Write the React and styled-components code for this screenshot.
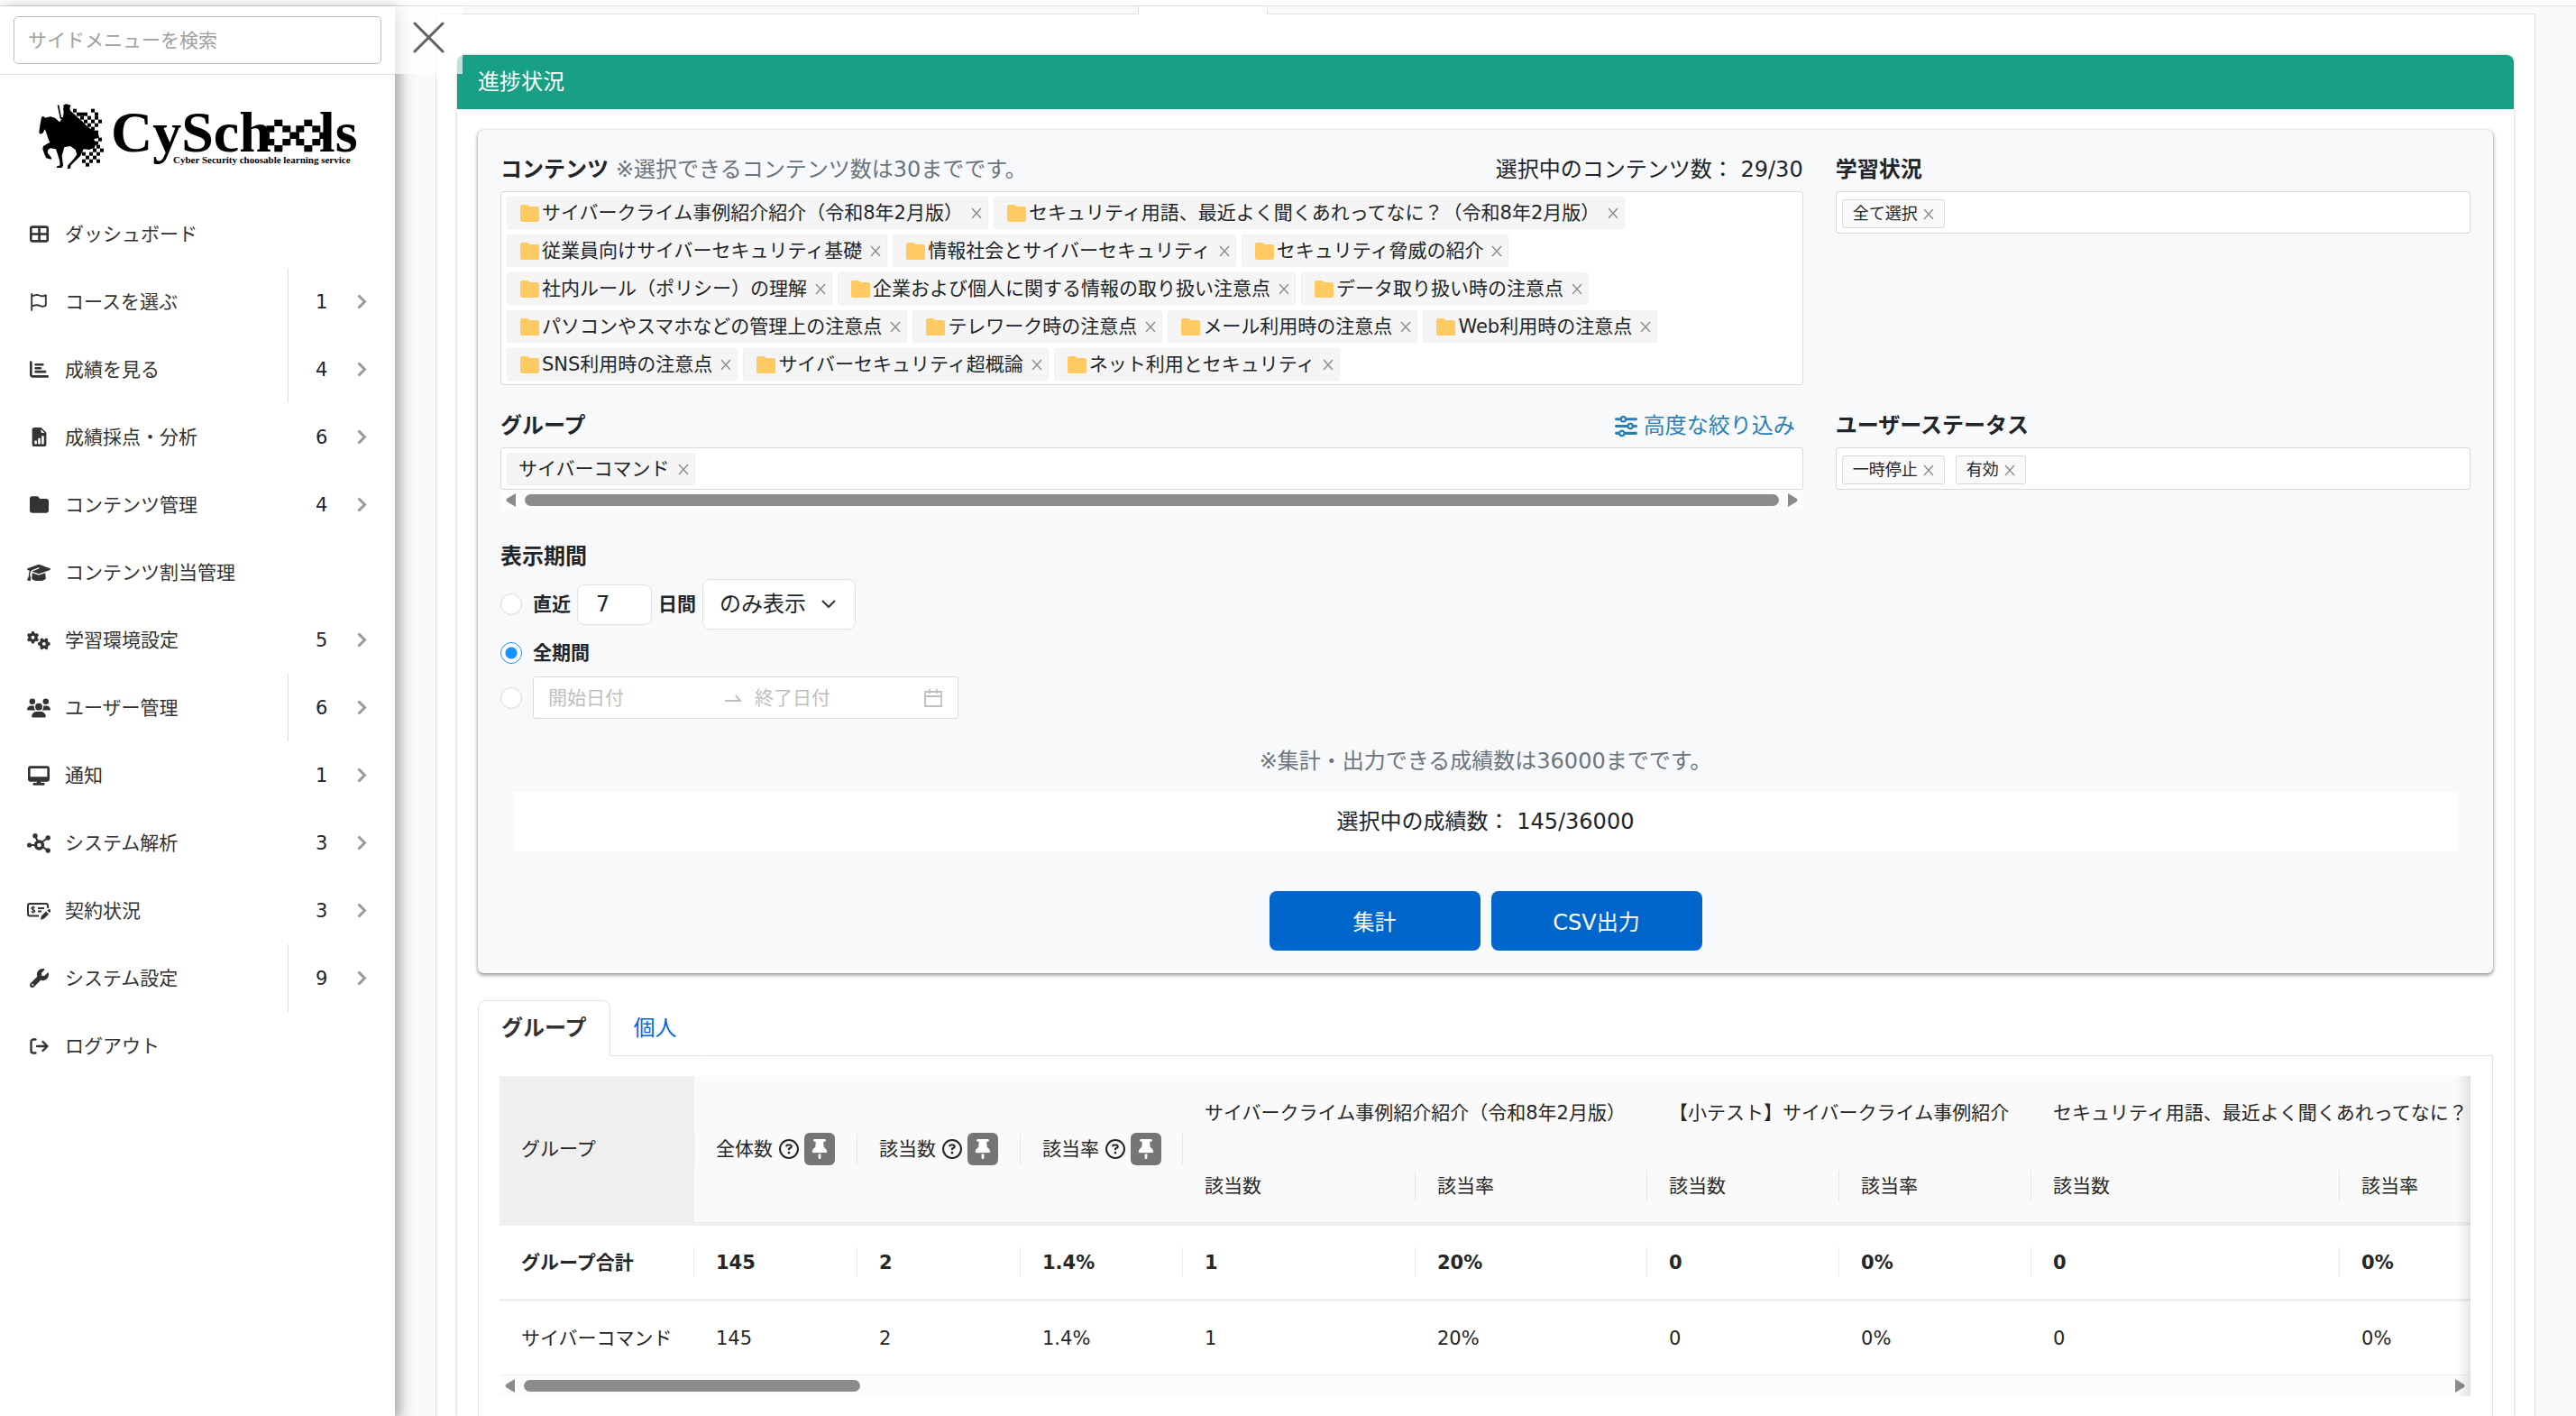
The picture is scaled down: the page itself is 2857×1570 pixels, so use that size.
import React, { useState } from 'react';
import styled, { createGlobalStyle } from 'styled-components';
import {
  FaTableCellsLarge,
  FaRegFlag,
  FaChartBar,
  FaFolder,
  FaGraduationCap,
  FaGears,
  FaUsers,
  FaDesktop,
  FaWrench,
  FaSliders,
  FaThumbtack,
  FaRegCircleQuestion
} from 'react-icons/fa6';
import { BsFileEarmarkBarGraphFill } from 'react-icons/bs';

const GlobalStyle = createGlobalStyle`
  * {
    box-sizing: border-box;
  }

  body {
    margin: 0;
    background: #fafafa;
    color: #212529;
    font-family: 'DejaVu Sans', 'Noto Sans CJK JP', sans-serif;
    font-size: 24px;
    line-height: 36px;
  }

  button,
  input,
  select {
    font-family: inherit;
    color: inherit;
  }

  button {
    border: none;
    padding: 0;
    background: none;
    cursor: pointer;
  }
`;

// Page frame
const Page = styled.div`
  display: flex;
  flex-direction: column;
  min-height: 100vh;
  overflow: hidden;
`;

const TopBar = styled.header`
  height: 7px;
  flex: none;
  background: #fff;
  border-bottom: 1px solid #ddd;
`;

const Columns = styled.div`
  display: flex;
  flex: 1;
`;

// Sidebar
const Sidebar = styled.aside`
  position: relative;
  z-index: 1;
  flex: none;
  width: 438px;
  background: #fff;
  box-shadow: 4px 4px 16px rgba(0, 0, 0, 0.4);
`;

const SearchArea = styled.div`
  padding: 11px 15px;
  border-bottom: 1px solid #ddd;
`;

const SearchInput = styled.input`
  display: block;
  width: 100%;
  height: 53px;
  padding: 0 15px;
  border: 1px solid #bbb;
  border-radius: 5px;
  font-size: 21px;
  outline: none;

  &::placeholder {
    color: #a0a0a0;
  }
`;

const CloseButton = styled.button`
  position: absolute;
  top: 0;
  left: 100%;
  display: flex;
  align-items: center;
  justify-content: center;
  width: 75px;
  height: 75px;
  padding-bottom: 7px;
  background: rgba(255, 255, 255, 0.7);
`;

const LogoLink = styled.a`
  display: block;
  padding: 23px 36px 26px;
  color: #000;

  svg {
    display: block;
  }
`;

const MenuItem = styled.li`
  display: flex;
  height: 75px;
`;

const MenuList = styled.ul`
  margin: 0;
  padding: 0;
  list-style: none;
`;

const MenuLink = styled.a`
  display: flex;
  align-items: center;
  flex: 1;
  gap: 16px;
  padding-left: 30px;
  color: #333;
  font-size: 21px;
  text-decoration: none;
`;

const MenuIcon = styled.span`
  display: flex;
  justify-content: center;
  width: 26px;
`;

const MenuToggle = styled.button`
  display: flex;
  align-items: center;
  justify-content: space-between;
  width: 119px;
  padding: 0 31px 0 30px;
  border-left: 1px solid ${props => (props.$divided ? '#ddd' : 'transparent')};
  font-size: 21px;
`;

// Main column
const Main = styled.main`
  display: flex;
  flex-direction: column;
  flex: 1;
  min-width: 0;
  padding: 0 45px;
`;

const PageTabs = styled.div`
  display: flex;
  height: 9px;
`;

const TabStrip = styled.div`
  flex: ${props => props.$grow};
  border-bottom: 1px solid #dee2e6;
`;

const CurrentTab = styled.div`
  width: 144px;
  background: #fff;
  border: solid #dee2e6;
  border-width: 0 1px;
`;

const PageBody = styled.div`
  display: flex;
  flex-direction: column;
  flex: 1;
  padding: 45px 23px 0;
  background: #fff;
  border: solid #dee2e6;
  border-width: 0 1px;
`;

const Card = styled.section`
  display: flex;
  flex-direction: column;
  flex: 1;
  border-radius: 8px 8px 0 0;
  box-shadow: 0 0 3px rgba(0, 0, 0, 0.3);
`;

const CardHeader = styled.h1`
  margin: 0;
  padding: 12px 23px;
  border-radius: 8px 8px 0 0;
  background: #17a085;
  color: #fff;
  font-size: 24px;
  font-weight: 400;
`;

const CardBody = styled.div`
  display: flex;
  flex-direction: column;
  flex: 1;
  padding: 23px 23px 0;
`;

// Filter form
const FilterPanel = styled.form`
  padding: 26px 25px 25px;
  border-radius: 6px;
  background: #f8f9fb;
  box-shadow: 0 2px 4px rgba(0, 0, 0, 0.45), 0 0 1px rgba(0, 0, 0, 0.3);
`;

const FilterRow = styled.div`
  display: flex;
  margin: 0 -18px 27px;
`;

const FilterCol = styled.div`
  width: ${props => (props.$wide ? '66.6667%' : '33.3333%')};
  padding: 0 18px;
`;

const FieldHead = styled.div`
  display: flex;
  align-items: center;
  gap: 8px;
  margin-bottom: 6px;
`;

const FieldTitle = styled.span`
  font-weight: 700;
`;

const Note = styled.span`
  color: #6c757d;
`;

const Counter = styled.span`
  margin-left: auto;
`;

const AdvancedLink = styled.a`
  display: flex;
  align-items: center;
  gap: 7px;
  margin-left: auto;
  padding-right: 9px;
  color: #2980b9;
  text-decoration: none;
`;

const TagBox = styled.div`
  display: flex;
  flex-wrap: wrap;
  align-items: center;
  gap: 6px;
  min-height: 47px;
  padding: 5px 6px 4px;
  border: 1px solid #d9d9d9;
  border-radius: 3px;
  background: #fff;
`;

const Tag = styled.span`
  display: flex;
  align-items: center;
  height: 36px;
  padding: 0 6px 0 12px;
  border: 1px solid #f0f0f0;
  border-radius: 3px;
  background: #f5f5f5;
  font-size: 21px;
  white-space: nowrap;

  button {
    display: flex;
    margin-left: 9px;
  }
`;

const SmallTag = styled(Tag)`
  height: 32px;
  margin: 2px 6px 0 0;
  padding: 0 11px;
  border-color: #d9d9d9;
  background: #fafafa;
  font-size: 18px;

  button {
    margin-left: 6px;
  }
`;

const FolderIcon = styled.svg`
  margin: 0 3px 0 2px;
`;

const ScrollBar = styled.div`
  display: flex;
  align-items: center;
  gap: 10px;
  height: 23px;
  padding: 0 6px;
  background: #fcfcfc;
`;

const ScrollTrack = styled.div`
  flex: 1;
`;

const ScrollThumb = styled.div`
  height: 13px;
  border-radius: 7px;
  background: #8b8b8b;
`;

const PeriodGroup = styled.fieldset`
  margin: 0;
  padding: 0;
  border: none;

  legend {
    margin-bottom: 7px;
    padding: 6px 0 0;
    font-weight: 700;
  }
`;

const PeriodRow = styled.div`
  display: flex;
  align-items: center;
  gap: 7px;
  margin-bottom: 8px;
  font-size: 21px;

  label {
    display: flex;
    align-items: center;
    gap: 12px;
    font-weight: 700;
  }
`;

const Radio = styled.input`
  appearance: none;
  width: 24px;
  height: 24px;
  margin: 0;
  border: 1px solid #d9d9d9;
  border-radius: 50%;
  background: #fff;

  &:checked {
    border-color: #1890ff;
    background: radial-gradient(circle, #1890ff 6px, #fff 7px);
  }
`;

const DaysInput = styled.input`
  width: 83px;
  height: 45px;
  padding: 0 20px;
  border: 1px solid #dee2e6;
  border-radius: 8px;
  background: #fff;
  font-size: 24px;
`;

const SelectWrap = styled.div`
  display: grid;
  align-items: center;
  width: 170px;

  select,
  svg {
    grid-area: 1 / 1;
  }

  svg {
    justify-self: end;
    margin-right: 22px;
    pointer-events: none;
  }
`;

const Select = styled.select`
  appearance: none;
  width: 100%;
  height: 56px;
  padding: 0 18px;
  border: 1px solid #dee2e6;
  border-radius: 8px;
  background: #fff;
  font-size: 24px;
`;

const DateRange = styled.div`
  display: flex;
  align-items: center;
  gap: 15px;
  width: 472px;
  height: 47px;
  margin-left: 5px;
  padding: 0 17px 0 16px;
  border: 1px solid #d9d9d9;
  border-radius: 3px;
  background: #fff;

  svg {
    flex: none;
  }
`;

const DateInput = styled.input`
  flex: 1;
  min-width: 0;
  padding: 0;
  border: none;
  background: none;
  font-size: 21px;
  outline: none;

  &:first-child {
    flex: none;
    width: 181px;
  }

  &::placeholder {
    color: #bfbfbf;
  }
`;

const LimitNote = styled.p`
  margin: 21px 0 16px;
  color: #6c757d;
  text-align: center;
`;

const ResultCount = styled.div`
  margin: 0 14px 44px;
  padding: 15px;
  background: #fff;
  text-align: center;
`;

const Actions = styled.div`
  display: flex;
  justify-content: center;
  gap: 12px;
`;

const PrimaryButton = styled.button`
  width: 234px;
  height: 66px;
  padding-bottom: 2px;
  border-radius: 8px;
  background: #0066cc;
  color: #fff;
  font-size: 24px;
`;

// Result tabs and table
const ResultTabs = styled.div`
  display: flex;
  margin-top: 30px;
`;

const ResultTab = styled.button`
  height: 62px;
  padding: 0 25px 5px;
  border: 1px solid;
  border-color: ${props => (props.$active ? '#dee2e6 #dee2e6 #fff' : 'transparent transparent #dee2e6')};
  border-radius: ${props => (props.$active ? '9px 9px 0 0' : '0')};
  color: ${props => (props.$active ? '#333' : '#0066ee')};
  font-size: 24px;
  font-weight: ${props => (props.$active ? 700 : 400)};
`;

const TabRest = styled.div`
  flex: 1;
  border-bottom: 1px solid #dee2e6;
`;

const ResultBody = styled.div`
  flex: 1;
  padding: 22px 24px 24px 23px;
  border: solid #dee2e6;
  border-width: 0 1px;
`;

const TableArea = styled.div`
  position: relative;

  &::after {
    content: '';
    position: absolute;
    top: 0;
    right: 0;
    bottom: 0;
    width: 15px;
    background: linear-gradient(to right, rgba(0, 0, 0, 0), rgba(0, 0, 0, 0.1));
  }
`;

const TableScroll = styled.div`
  overflow: hidden;
`;

const Table = styled.table`
  width: 2383px;
  table-layout: fixed;
  border-collapse: separate;
  border-spacing: 0;
  color: #262626;
  font-size: 21px;
  text-align: left;
`;

const HeadCell = styled.th`
  height: ${props => (props.$last ? 84 : 82)}px;
  padding: 0 0 0 24px;
  border-bottom: ${props => (props.$last ? 4 : 0)}px solid #efefef;
  background-color: ${props => (props.$fixed ? '#efefef' : '#fafafa')};
  background-image: linear-gradient(#e6e6e6, #e6e6e6);
  background-repeat: no-repeat;
  background-position: right center;
  background-size: ${props => (props.$plain ? 0 : 1)}px 34px;
  font-weight: 400;
  white-space: nowrap;
`;

const TotalCell = styled.td`
  height: 84px;
  padding: 0 0 0 24px;
  border-bottom: 3px solid #efefef;
  background: linear-gradient(#ebebeb, #ebebeb) right center / 1px 33px no-repeat;
  font-weight: 700;
`;

const Cell = styled.td`
  height: 82px;
  padding: 0 0 0 24px;
  border-bottom: 1px solid #f0f0f0;
`;

const CellLink = styled.a`
  color: #262626;
  text-decoration: none;
`;

const PinnedHead = styled.div`
  display: flex;
  align-items: center;

  svg {
    flex: none;
  }
`;

const HelpIcon = styled(FaRegCircleQuestion)`
  margin: 0 6px 0 7px;
`;

const PinButton = styled.button`
  display: flex;
  align-items: center;
  justify-content: center;
  width: 34px;
  height: 36px;
  border-radius: 6px;
  background: #757575;
  color: #fff;
`;

const NodesIcon = () => (
  <svg width="26" height="22" viewBox="0 0 26 22" fill="#333" stroke="#333" strokeWidth="2">
    <path d="M3 13h7M9 3l3 6M23 5l-7 5M23 19l-7-5" />
    <circle cx="13.5" cy="13" r="4" fill="#fff" strokeWidth="3.400" />
    <g stroke="none">
      <circle cx="2.6" cy="13" r="2.6" />
      <circle cx="9" cy="2.8" r="2.7" />
      <circle cx="23.2" cy="5" r="2.7" />
      <circle cx="23.2" cy="19" r="2.7" />
    </g>
  </svg>
);

const ContractIcon = () => (
  <svg width="26" height="20" viewBox="0 0 26 20" fill="none" stroke="#333" strokeWidth="2">
    <path d="M13 15.5H3a2 2 0 0 1-2-2V4a2 2 0 0 1 2-2h18a2 2 0 0 1 2 2v3" />
    <path d="M12 7h7M12 10.5h4" />
    <path d="M8.8 6.5C7 5.4 4.8 5.8 4.9 7.2c.1 1.6 4 1.1 3.9 3-.1 1.5-2.8 1.5-4.2.4M6.8 4.5v8" strokeWidth="1.3" />
    <path d="M15 20l1-4.5 5-5 3 3-5 5zM22.5 9.5l1-1a1.600 1.600 0 0 1 2.400 2.400l-1 1z" fill="#333" stroke="none" />
  </svg>
);

const LogoutIcon = () => (
  <svg width="21" height="18" viewBox="0 0 21 18" fill="none" stroke="#333" strokeWidth="2.4" strokeLinecap="round" strokeLinejoin="round">
    <path d="M6.5 1.5H4A2.5 2.5 0 0 0 1.5 4v10A2.5 2.5 0 0 0 4 16.5h2.5M8 9h11.5M14.5 4l5 5-5 5" />
  </svg>
);

const menu = [
  { label: 'ダッシュボード', icon: <FaTableCellsLarge size={21} /> },
  { label: 'コースを選ぶ', icon: <FaRegFlag size={20} />, count: 1, divided: true },
  { label: '成績を見る', icon: <FaChartBar size={21} />, count: 4, divided: true },
  { label: '成績採点・分析', icon: <BsFileEarmarkBarGraphFill size={21} />, count: 6 },
  { label: 'コンテンツ管理', icon: <FaFolder size={21} />, count: 4 },
  { label: 'コンテンツ割当管理', icon: <FaGraduationCap size={26} /> },
  { label: '学習環境設定', icon: <FaGears size={26} />, count: 5 },
  { label: 'ユーザー管理', icon: <FaUsers size={26} />, count: 6, divided: true },
  { label: '通知', icon: <FaDesktop size={24} />, count: 1 },
  { label: 'システム解析', icon: <NodesIcon />, count: 3 },
  { label: '契約状況', icon: <ContractIcon />, count: 3 },
  { label: 'システム設定', icon: <FaWrench size={21} />, count: 9, divided: true },
  { label: 'ログアウト', icon: <LogoutIcon /> }
];

const contents = [
  'サイバークライム事例紹介紹介（令和8年2月版）',
  'セキュリティ用語、最近よく聞くあれってなに？（令和8年2月版）',
  '従業員向けサイバーセキュリティ基礎',
  '情報社会とサイバーセキュリティ',
  'セキュリティ脅威の紹介',
  '社内ルール（ポリシー）の理解',
  '企業および個人に関する情報の取り扱い注意点',
  'データ取り扱い時の注意点',
  'パソコンやスマホなどの管理上の注意点',
  'テレワーク時の注意点',
  'メール利用時の注意点',
  'Web利用時の注意点',
  'SNS利用時の注意点',
  'サイバーセキュリティ超概論',
  'ネット利用とセキュリティ'
];

const columnWidths = [216, 181, 181, 180, 258, 257, 213, 213, 342, 342];
const pinnedColumns = ['全体数', '該当数', '該当率'];
const courseColumns = [
  'サイバークライム事例紹介紹介（令和8年2月版）',
  '【小テスト】サイバークライム事例紹介',
  'セキュリティ用語、最近よく聞くあれってなに？（令和8年2月版）'
];
const values = ['145', '2', '1.4%', '1', '20%', '0', '0%', '0', '0%'];

// Squares that scatter off the rider's cape, [x, y]
const capePixels = [
  [135, 44], [147, 56], [159, 68], [171, 56], [195, 44], [207, 56], [171, 80], [183, 68],
  [195, 80], [207, 68], [183, 92], [207, 92], [219, 80], [195, 104], [207, 116], [159, 56],
  [219, 140], [207, 152], [195, 164], [213, 164], [225, 176], [213, 188], [201, 176], [189, 188],
  [177, 200], [165, 188], [201, 200], [213, 212], [189, 212], [165, 212], [177, 224]
];

// Blocks that make up one "o" of the wordmark
const letterBlocks = [[805, 80], [778, 100], [832, 100], [762, 122], [856, 122], [778, 144], [832, 144], [805, 165]];

const Logo = () => (
  <svg width="366" height="90" viewBox="0 0 366 90" role="img" aria-label="CySchools">
    <g transform="scale(0.3333)">
      <path d="M30 72l6-4 6 6 18-4 15 4 15 14 6-8-4-4-9-44 5-1 8 41 6 0 2-17q-4-10 0-17l-2-6 10-4 16 4-4 10 2 8 14 12 10 10 15 13 15 15 15 12 23 10 4 18-17 5 7 20-12 10-10 5-20-2-10 22-20 20-12 12-2 10-10 2 2-12 18-20 12-16-5-16-17-12-20 4-8 28 4 32-4 8-18 0 2-5 10-3-2-17-8-25-4-12-18-3-8 5-2 10 8 10 6 8-2 4-16-4-6-13-6-17 2-10 22-13-4-7-6-18-4-12-4-6-4 12-10 4-4-6 3-22z" />
      {capePixels.map(([x, y], i) => <rect key={i} x={x} y={y} width="12" height="12" />)}
      {[0, 99].map(dx => letterBlocks.map(([x, y], i) => (
        <rect key={`${dx}-${i}`} x={x + dx} y={y} width="27" height="22" />
      )))}
    </g>
    <g fontFamily="'Liberation Serif', serif" fontWeight="700">
      <g fontSize="64">
        <text x="87" y="62">CySch</text>
        <text x="318" y="62">ls</text>
      </g>
      <text x="156" y="75" fontSize="11">Cyber Security choosable learning service</text>
    </g>
  </svg>
);

const RemoveButton = ({ name }) => (
  <button type="button" aria-label={`${name}を削除`}>
    <svg width="12" height="13" viewBox="0 0 12 13" stroke="#8c8c8c" strokeWidth="1.4">
      <path d="M1 1l10 11M11 1L1 12" />
    </svg>
  </button>
);

const Folder = () => (
  <FolderIcon width="21" height="19" viewBox="0 0 21 19">
    <path d="M2 0h6l3 2h8a2 2 0 0 1 2 2v13a2 2 0 0 1-2 2H2a2 2 0 0 1-2-2V2a2 2 0 0 1 2-2z" fill="#ffca62" />
  </FolderIcon>
);

const HorizontalScroll = ({ width }) => (
  <ScrollBar>
    <svg width="11" height="15" viewBox="0 0 11 15" fill="#8b8b8b"><path d="M11 0v15L1 9q-1-1.5 0-3z" /></svg>
    <ScrollTrack>
      <ScrollThumb style={{ width }} />
    </ScrollTrack>
    <svg width="11" height="15" viewBox="0 0 11 15" fill="#8b8b8b"><path d="M0 0v15l10-6q1-1.5 0-3z" /></svg>
  </ScrollBar>
);

const SideMenu = () => (
  <Sidebar>
    <SearchArea>
      <SearchInput type="search" placeholder="サイドメニューを検索" aria-label="サイドメニューを検索" />
    </SearchArea>
    <CloseButton type="button" aria-label="閉じる">
      <svg width="35" height="35" viewBox="0 0 35 35" stroke="#606060" strokeWidth="3" strokeLinecap="round">
        <path d="M2 2l31 31M33 2L2 33" />
      </svg>
    </CloseButton>
    <LogoLink href="#home"><Logo /></LogoLink>
    <nav>
      <MenuList>
        {menu.map(item => (
          <MenuItem key={item.label}>
            <MenuLink href="#menu">
              <MenuIcon>{item.icon}</MenuIcon>
              {item.label}
            </MenuLink>
            {item.count && (
              <MenuToggle type="button" $divided={item.divided}>
                {item.count}
                <svg width="11" height="17" viewBox="0 0 11 17" fill="none" stroke="#999" strokeWidth="3">
                  <path d="M1.5 1.5l7 7-7 7" />
                </svg>
              </MenuToggle>
            )}
          </MenuItem>
        ))}
      </MenuList>
    </nav>
  </Sidebar>
);

const FilterForm = () => {
  const [period, setPeriod] = useState('all');
  const [days, setDays] = useState('7');

  const handlePeriod = (e) => setPeriod(e.target.value);

  return (
    <FilterPanel onSubmit={(e) => e.preventDefault()}>
      <FilterRow>
        <FilterCol $wide>
          <FieldHead>
            <FieldTitle>コンテンツ</FieldTitle>
            <Note>※選択できるコンテンツ数は30までです。</Note>
            <Counter>選択中のコンテンツ数： 29/30</Counter>
          </FieldHead>
          <TagBox>
            {contents.map(name => (
              <Tag key={name}><Folder />{name}<RemoveButton name={name} /></Tag>
            ))}
          </TagBox>
        </FilterCol>
        <FilterCol>
          <FieldHead><FieldTitle>学習状況</FieldTitle></FieldHead>
          <TagBox>
            <SmallTag>全て選択<RemoveButton name="全て選択" /></SmallTag>
          </TagBox>
        </FilterCol>
      </FilterRow>

      <FilterRow>
        <FilterCol $wide>
          <FieldHead>
            <FieldTitle>グループ</FieldTitle>
            <AdvancedLink href="#advanced"><FaSliders size={25} />高度な絞り込み</AdvancedLink>
          </FieldHead>
          <TagBox>
            <Tag>サイバーコマンド<RemoveButton name="サイバーコマンド" /></Tag>
          </TagBox>
          <HorizontalScroll width="100%" />
        </FilterCol>
        <FilterCol>
          <FieldHead><FieldTitle>ユーザーステータス</FieldTitle></FieldHead>
          <TagBox>
            <SmallTag>一時停止<RemoveButton name="一時停止" /></SmallTag>
            <SmallTag>有効<RemoveButton name="有効" /></SmallTag>
          </TagBox>
        </FilterCol>
      </FilterRow>

      <PeriodGroup>
        <legend>表示期間</legend>
        <PeriodRow>
          <label>
            <Radio type="radio" name="period" value="recent" checked={period === 'recent'} onChange={handlePeriod} />
            直近
          </label>
          <DaysInput aria-label="日数" value={days} onChange={(e) => setDays(e.target.value)} />
          <label htmlFor="recentMode">日間</label>
          <SelectWrap>
            <Select id="recentMode"><option>のみ表示</option></Select>
            <svg width="16" height="10" viewBox="0 0 16 10" fill="none" stroke="#343a40" strokeWidth="2.2">
              <path d="M1 1l7 7 7-7" />
            </svg>
          </SelectWrap>
        </PeriodRow>
        <PeriodRow>
          <label>
            <Radio type="radio" name="period" value="all" checked={period === 'all'} onChange={handlePeriod} />
            全期間
          </label>
        </PeriodRow>
        <PeriodRow>
          <Radio type="radio" name="period" value="range" aria-label="期間指定" checked={period === 'range'} onChange={handlePeriod} />
          <DateRange>
            <DateInput placeholder="開始日付" aria-label="開始日付" />
            <svg width="18" height="8" viewBox="0 0 18 8" fill="none" stroke="#bfbfbf" strokeWidth="2">
              <path d="M0 7h17l-5-6" />
            </svg>
            <DateInput placeholder="終了日付" aria-label="終了日付" />
            <svg width="20" height="20" viewBox="0 0 20 20" fill="none" stroke="#bfbfbf" strokeWidth="1.8">
              <path d="M1 3h18v16H1zM1 8h18M6 0v5M14 0v5" />
            </svg>
          </DateRange>
        </PeriodRow>
      </PeriodGroup>

      <LimitNote>※集計・出力できる成績数は36000までです。</LimitNote>
      <ResultCount>選択中の成績数： 145/36000</ResultCount>
      <Actions>
        <PrimaryButton type="submit">集計</PrimaryButton>
        <PrimaryButton type="button">CSV出力</PrimaryButton>
      </Actions>
    </FilterPanel>
  );
};

const ResultTable = () => (
  <TableArea>
    <TableScroll>
      <Table>
        <colgroup>
          {columnWidths.map((width, i) => <col key={i} style={{ width }} />)}
        </colgroup>
        <thead>
          <tr>
            <HeadCell rowSpan={2} $fixed $last>グループ</HeadCell>
            {pinnedColumns.map(name => (
              <HeadCell key={name} rowSpan={2} $last>
                <PinnedHead>
                  {name}
                  <HelpIcon size={22} />
                  <PinButton type="button" aria-label={`${name}を固定`}><FaThumbtack size={22} /></PinButton>
                </PinnedHead>
              </HeadCell>
            ))}
            {courseColumns.map(name => <HeadCell key={name} colSpan={2} $plain>{name}</HeadCell>)}
          </tr>
          <tr>
            {courseColumns.map(name => (
              <React.Fragment key={name}>
                <HeadCell $last>該当数</HeadCell>
                <HeadCell $last>該当率</HeadCell>
              </React.Fragment>
            ))}
          </tr>
        </thead>
        <tbody>
          <tr>
            <TotalCell>グループ合計</TotalCell>
            {values.map((value, i) => <TotalCell key={i}>{value}</TotalCell>)}
          </tr>
          <tr>
            <Cell><CellLink href="#group">サイバーコマンド</CellLink></Cell>
            {values.map((value, i) => <Cell key={i}>{value}</Cell>)}
          </tr>
        </tbody>
      </Table>
    </TableScroll>
    <HorizontalScroll width="17.5%" />
  </TableArea>
);

const App = () => {
  const [tab, setTab] = useState('group');

  return (
    <Page>
      <GlobalStyle />
      <TopBar />
      <Columns>
        <SideMenu />
        <Main>
          <PageTabs>
            <TabStrip $grow={779} />
            <CurrentTab />
            <TabStrip $grow={1406} />
          </PageTabs>
          <PageBody>
            <Card>
              <CardHeader>進捗状況</CardHeader>
              <CardBody>
                <FilterForm />
                <ResultTabs>
                  <ResultTab type="button" $active={tab === 'group'} onClick={() => setTab('group')}>グループ</ResultTab>
                  <ResultTab type="button" $active={tab === 'person'} onClick={() => setTab('person')}>個人</ResultTab>
                  <TabRest />
                </ResultTabs>
                <ResultBody>
                  <ResultTable />
                </ResultBody>
              </CardBody>
            </Card>
          </PageBody>
        </Main>
      </Columns>
    </Page>
  );
};

export default App;
